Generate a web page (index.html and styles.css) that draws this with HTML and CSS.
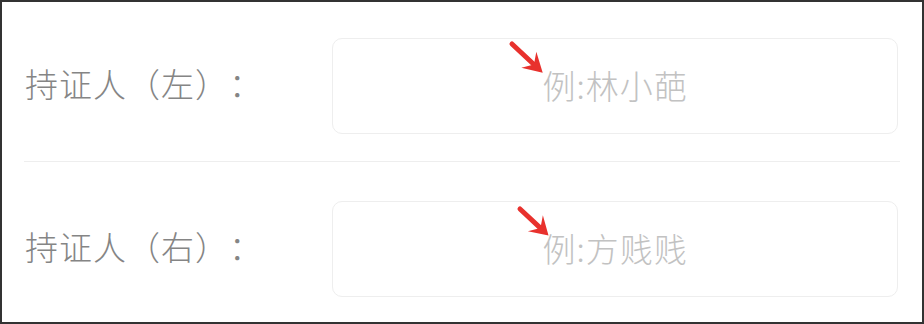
FILE: index.html
```html
<!DOCTYPE html>
<html lang="zh-CN">
<head>
<meta charset="utf-8">
<title>持证人</title>
<link rel="stylesheet" href="styles.css">
</head>
<body>
<div class="frame">
  <div class="row row-first">
    <label class="label">持证人（左）：</label>
    <input class="field" type="text" placeholder="例:林小葩">
  </div>
  <div class="row row-second">
    <label class="label">持证人（右）：</label>
    <input class="field" type="text" placeholder="例:方贱贱">
  </div>
  <svg class="arrows" width="924" height="324" viewBox="0 0 924 324" xmlns="http://www.w3.org/2000/svg">
    <g transform="translate(512 44) rotate(43)">
      <line x1="0" y1="0" x2="30" y2="0" stroke="#e8312d" stroke-width="5" stroke-linecap="round"/>
      <polygon points="42,0 23,-11 30,0 23,11" fill="#e8312d"/>
    </g>
    <g transform="translate(520 209) rotate(43)">
      <line x1="0" y1="0" x2="28" y2="0" stroke="#e8312d" stroke-width="5" stroke-linecap="round"/>
      <polygon points="39,0 21,-11 28,0 21,11" fill="#e8312d"/>
    </g>
  </svg>
</div>
</body>
</html>
```

FILE: styles.css
```css
html, body {
  margin: 0;
  padding: 0;
  background: #ffffff;
}

.frame {
  position: relative;
  width: 924px;
  height: 324px;
  box-sizing: border-box;
  border: 2px solid #333333;
  background: #ffffff;
  font-family: "Noto Sans CJK SC", "Noto Sans", sans-serif;
}

.row {
  display: flex;
  align-items: center;
  margin: 0 22px;
}

.row-first {
  padding: 36px 0 27px;
  border-bottom: 1px solid #eeeeee;
}

.row-second {
  padding: 39px 0 0;
}

.label {
  width: 308px;
  padding: 0 0 6px 1px;
  box-sizing: border-box;
  font-size: 33px;
  font-weight: 300;
  line-height: 40px;
  letter-spacing: 1px;
  color: #858585;
  white-space: nowrap;
  text-spacing-trim: space-all;
  font-feature-settings: "halt" 0, "chws" 0;
}

.field {
  width: 566px;
  height: 96px;
  box-sizing: border-box;
  margin: 0;
  padding: 0 0 2px;
  border: 1px solid #eeeeee;
  border-radius: 10px;
  background: #ffffff;
  font-family: "Noto Sans CJK SC", "Noto Sans", sans-serif;
  font-size: 33px;
  font-weight: 300;
  letter-spacing: 1px;
  color: #333333;
  text-align: center;
  outline: none;
}

.field::placeholder {
  color: #c2c2c2;
}

.arrows {
  position: absolute;
  left: -2px;
  top: -2px;
  pointer-events: none;
}
```
